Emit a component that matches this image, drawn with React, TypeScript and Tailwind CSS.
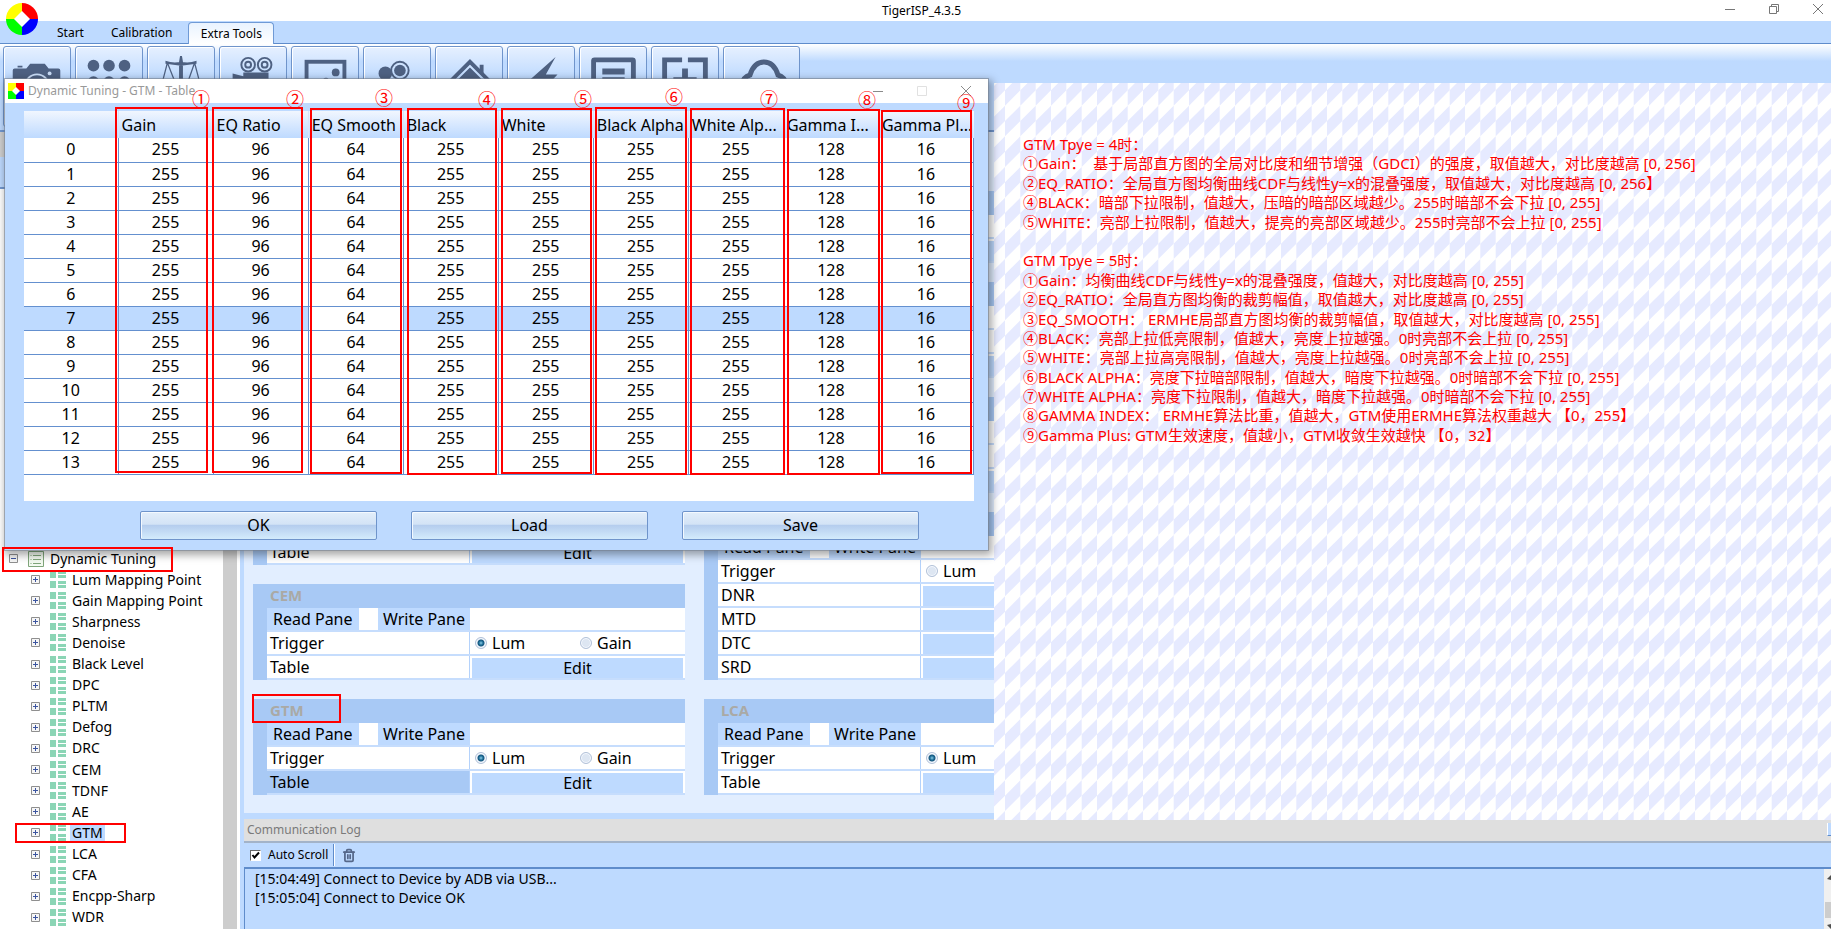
import type { ReactNode } from 'react';
import { Trash2 } from 'lucide-react';

const UI_FONT = "font-['Noto_Sans','Noto_Sans_CJK_SC',sans-serif]";

const columns = [
  { title: 'Gain', value: 255 },
  { title: 'EQ Ratio', value: 96 },
  { title: 'EQ Smooth', value: 64 },
  { title: 'Black', value: 255 },
  { title: 'White', value: 255 },
  { title: 'Black Alpha', value: 255 },
  { title: 'White Alp...', value: 255 },
  { title: 'Gamma I...', value: 128 },
  { title: 'Gamma Pl...', value: 16 },
];

const rowCount = 14;
const selectedRow = 7;
const focusedColumn = 2;

const treeItems = [
  'Lum Mapping Point',
  'Gain Mapping Point',
  'Sharpness',
  'Denoise',
  'Black Level',
  'DPC',
  'PLTM',
  'Defog',
  'DRC',
  'CEM',
  'TDNF',
  'AE',
  'GTM',
  'LCA',
  'CFA',
  'Encpp-Sharp',
  'WDR',
];

const notes = [
  'GTM Tpye = 4时：',
  '①Gain：  基于局部直方图的全局对比度和细节增强（GDCI）的强度，取值越大，对比度越高 [0, 256]',
  '②EQ_RATIO：全局直方图均衡曲线CDF与线性y=x的混叠强度，取值越大，对比度越高 [0, 256】',
  '④BLACK：暗部下拉限制，值越大，压暗的暗部区域越少。255时暗部不会下拉 [0, 255]',
  '⑤WHITE：亮部上拉限制，值越大，提亮的亮部区域越少。255时亮部不会上拉 [0, 255]',
  '',
  'GTM Tpye = 5时：',
  '①Gain：均衡曲线CDF与线性y=x的混叠强度，值越大，对比度越高 [0, 255]',
  '②EQ_RATIO：全局直方图均衡的裁剪幅值，取值越大，对比度越高 [0, 255]',
  '③EQ_SMOOTH： ERMHE局部直方图均衡的裁剪幅值，取值越大，对比度越高 [0, 255]',
  '④BLACK：亮部上拉低亮限制，值越大，亮度上拉越强。0时亮部不会上拉 [0, 255]',
  '⑤WHITE：亮部上拉高亮限制，值越大，亮度上拉越强。0时亮部不会上拉 [0, 255]',
  '⑥BLACK ALPHA：亮度下拉暗部限制，值越大，暗度下拉越强。0时暗部不会下拉 [0, 255]',
  '⑦WHITE ALPHA：亮度下拉限制，值越大，暗度下拉越强。0时暗部不会下拉 [0, 255]',
  '⑧GAMMA INDEX： ERMHE算法比重，值越大，GTM使用ERMHE算法权重越大 【0，255】',
  '⑨Gamma Plus: GTM生效速度，值越小，GTM收敛生效越快 【0，32】',
];

const columnMarks = [
  { mark: '①', box: 'left-[115px] top-[107px] w-[93px] h-[366px]', label: 'left-[192px] top-[86px]' },
  { mark: '②', box: 'left-[212px] top-[107px] w-[91px] h-[366px]', label: 'left-[286px] top-[86px]' },
  { mark: '③', box: 'left-[310px] top-[108px] w-[92px] h-[366px]', label: 'left-[375px] top-[85px]' },
  { mark: '④', box: 'left-[407px] top-[108px] w-[90px] h-[367px]', label: 'left-[478px] top-[87px]' },
  { mark: '⑤', box: 'left-[501px] top-[108px] w-[91px] h-[366px]', label: 'left-[574px] top-[86px]' },
  { mark: '⑥', box: 'left-[595px] top-[107px] w-[92px] h-[368px]', label: 'left-[665px] top-[84px]' },
  { mark: '⑦', box: 'left-[690px] top-[108px] w-[95px] h-[367px]', label: 'left-[760px] top-[86px]' },
  { mark: '⑧', box: 'left-[787px] top-[109px] w-[93px] h-[366px]', label: 'left-[858px] top-[87px]' },
  { mark: '⑨', box: 'left-[881px] top-[110px] w-[91px] h-[364px]', label: 'left-[957px] top-[90px]' },
];

const otherMarks = [
  'left-[2px] top-[547px] w-[171px] h-[25px]',
  'left-[252px] top-[694px] w-[89px] h-[29px]',
  'left-[15px] top-[823px] w-[111px] h-[20px]',
];

const tools: { name: string; art: ReactNode }[] = [
  {
    name: 'Capture',
    art: (
      <>
        <path d="M14 18h5v2h-5zM9 23q0-2 2-2h12l4-5h15l4 5h10q2 0 2 2v30H9z" />
        <circle cx="34" cy="39" r="12" fill="none" stroke="#c9dcf6" strokeWidth="2" />
        <circle cx="47" cy="26" r="2" fill="#c9dcf6" />
      </>
    ),
  },
  {
    name: 'Dots',
    art: (
      <>
        {[18, 35, 52].map((y) => [18, 34, 50].map((x) => <circle key={`${x}-${y}`} cx={x} cy={y} r="6" />))}
      </>
    ),
  },
  {
    name: 'Balance',
    art: (
      <>
        <path d="M33 8h2l1 6v46h-4V14zM18 13q8 3 16 1q8 2 16-1v3q-8 1-16 2q-8-1-16-2z" />
        <path d="M20 15 14 38M20 15 29 38M48 15 40 38M48 15 54 38" fill="none" stroke="#4e6182" strokeWidth="1.3" />
      </>
    ),
  },
  {
    name: 'Video',
    art: (
      <>
        <circle cx="29" cy="17" r="7" fill="none" stroke="#4e6182" strokeWidth="2" />
        <circle cx="46" cy="17" r="7" fill="none" stroke="#4e6182" strokeWidth="2" />
        <circle cx="29" cy="17" r="3" fill="none" stroke="#4e6182" strokeWidth="2" />
        <circle cx="46" cy="17" r="3" fill="none" stroke="#4e6182" strokeWidth="2" />
        <path d="M13 26l11 3v-4h26v25H24v-4l-11 4z" />
      </>
    ),
  },
  {
    name: 'Picture',
    art: (
      <>
        <rect x="15" y="14" width="39" height="36" fill="none" stroke="#4e6182" strokeWidth="4" />
        <circle cx="45" cy="25" r="4" />
        <path d="M20 46l12-14q3-3 6 0l12 14z" />
      </>
    ),
  },
  {
    name: 'Blend',
    art: (
      <>
        <circle cx="22" cy="26" r="7" />
        <circle cx="37" cy="23" r="9" fill="none" stroke="#4e6182" strokeWidth="2" />
        <circle cx="37" cy="23" r="6" />
        <circle cx="30" cy="40" r="8" />
      </>
    ),
  },
  {
    name: 'Home',
    art: (
      <>
        <path d="M12 37 35 14 58 37" fill="none" stroke="#4e6182" strokeWidth="4" />
        <path d="M35 20 51 36v16H19V36zM45 17h4v11l-4-4z" />
      </>
    ),
  },
  { name: 'Flash', art: <path d="M49 9 22 33h12l-9 22 26-28h-12z" /> },
  {
    name: 'List',
    art: (
      <>
        <rect x="14" y="12" width="41" height="42" rx="1" fill="none" stroke="#4e6182" strokeWidth="5" />
        <path d="M23 21h23v6H23zM23 30h23v5H23zM23 40h23v5H23z" />
      </>
    ),
  },
  {
    name: 'Focus',
    art: (
      <>
        <path d="M13 32V12h18M37 12h18v20" fill="none" stroke="#4e6182" strokeWidth="5" />
        <path d="M31 21h6v9h9v6h-9v9h-6v-9h-9v-6h9z" />
      </>
    ),
  },
  {
    name: 'Cloud',
    art: <path d="M14 38q1-8 8-10q4-13 14-13t14 13q7 2 8 10" fill="none" stroke="#4e6182" strokeWidth="5" />,
  },
];

function Logo({ square = false, className }: { square?: boolean; className: string }) {
  return (
    <svg viewBox="0 0 32 32" className={className} aria-hidden="true">
      {square ? (
        <>
          <path d="M0 0h16v16H0z" fill="#ffff00" />
          <path d="M16 0h16v16H16z" fill="#ff0000" />
          <path d="M0 16h16v16H0z" fill="#00ff00" />
          <path d="M16 16h16v16H16z" fill="#0000ff" />
        </>
      ) : (
        <>
          <path d="M16 16H0A16 16 0 0 1 16 0z" fill="#ffff00" />
          <path d="M16 16V0a16 16 0 0 1 16 16z" fill="#ff0000" />
          <path d="M16 16v16A16 16 0 0 1 0 16z" fill="#00ff00" />
          <path d="M16 16h16a16 16 0 0 1-16 16z" fill="#0000ff" />
        </>
      )}
      <path d="M16 8 24 16 16 24 8 16z" fill="#fff" />
    </svg>
  );
}

function WindowButtons({ restore = false, tone }: { restore?: boolean; tone: string }) {
  return (
    <div className={`flex items-center ${tone}`}>
      <button type="button" aria-label="Minimize" className="flex w-11 justify-center">
        <svg viewBox="0 0 10 10" className="h-[10px] w-[10px]" fill="none" stroke="currentColor">
          <path d="M0 5.5h10" />
        </svg>
      </button>
      <button type="button" aria-label="Maximize" className={`flex w-11 justify-center ${restore ? '' : 'opacity-25'}`}>
        <svg viewBox="0 0 10 10" className="h-[10px] w-[10px]" fill="none" stroke="currentColor">
          {restore ? <path d="M.5 2.5h7v7h-7zM2.5 2.5v-2h7v7h-2" /> : <path d="M.5.5h9v9h-9z" />}
        </svg>
      </button>
      <button type="button" aria-label="Close" className="flex w-11 justify-center">
        <svg viewBox="0 0 10 10" className="h-[10px] w-[10px]" fill="none" stroke="currentColor">
          <path d="M0 0 10 10M10 0 0 10" />
        </svg>
      </button>
    </div>
  );
}

function Header() {
  return (
    <header>
      <div className="relative flex h-[21px] items-center justify-center bg-white pl-3">
        <Logo className="absolute top-[3px] left-[6px] z-10 h-8 w-8" />
        <h1 className="text-xs text-black">TigerISP_4.3.5</h1>
        <div className="absolute top-0 right-[-9px] flex h-[17px]">
          <WindowButtons restore tone="text-[#777777]" />
        </div>
      </div>
      <nav className="flex h-[23px] items-end border-b border-[#5f8ccb] bg-[#bedaff] pl-[39px] text-xs text-black">
        <button type="button" className="h-[21px] px-[18px]">Start</button>
        <button type="button" className="h-[21px] px-[9px]">Calibration</button>
        <button
          type="button"
          className="-mb-px ml-[7px] h-[22px] w-[86px] rounded-t border border-b-0 border-[#6f9ad6] bg-gradient-to-b from-[#e9f3ff] to-white"
        >
          Extra Tools
        </button>
      </nav>
      <div className="flex h-[88px] gap-1 border-b-2 border-[#7297cf] bg-gradient-to-b from-white via-[#bedaff] via-20% to-[#bedaff] px-[3px] pt-[2px] pb-[3px]">
        {tools.map((tool, index) => (
          <button
            key={tool.name}
            type="button"
            aria-label={tool.name}
            className={`flex justify-center rounded-[3px] border border-[#6f94cb] bg-gradient-to-b from-[#e6f0ff] via-[#bedaff] via-40% to-[#a9c6f2] shadow-[inset_1px_1px_0_#ffffff] ${
              index === tools.length - 1 ? 'w-[77px]' : 'w-[68px]'
            }`}
          >
            <svg viewBox="0 0 68 80" className="h-20 w-[68px]" fill="#4e6182">
              {tool.art}
            </svg>
          </button>
        ))}
      </div>
    </header>
  );
}

function Expander({ open = false }: { open?: boolean }) {
  return (
    <svg viewBox="0 0 9 9" className="h-[9px] w-[9px] shrink-0" fill="#f6f6f6" stroke="#8f8f8f">
      <path d="M.5.5h8v8h-8z" />
      <path d={open ? 'M2 4.5h5' : 'M2 4.5h5M4.5 2v5'} stroke="#3c55a0" />
    </svg>
  );
}

function TreePanel() {
  return (
    <aside className="flex w-[240px] shrink-0 flex-col bg-white">
      <div className="h-[25px] bg-[#cfcfcf]" />
      <div className="h-8 border-b-2 border-[#7297cf] bg-[#bedaff]" />
      <div className="flex min-h-0 flex-1">
        <ul className="mt-auto mb-px flex h-[380px] flex-1 flex-col justify-between text-sm text-black">
          <li className="flex h-[21px] items-center pl-[9px]">
            <Expander open />
            <svg viewBox="0 0 16 16" className="mr-[6px] ml-[10px] h-4 w-4" fill="#f3faf0" stroke="#7fa57a">
              <path d="M.5.5h15v15H.5z" />
              <path d="M5 4.5h8M5 8.5h8M5 12.5h8M2.5 4.5h1M2.5 8.5h1M2.5 12.5h1" />
            </svg>
            <span>Dynamic Tuning</span>
          </li>
          {treeItems.map((item) => (
            <li key={item} className="flex h-[21px] items-center pl-[31px]">
              <Expander />
              <svg viewBox="0 0 16 17" className="mr-1 ml-[10px] h-[17px] w-4" fill="#8bd5b5">
                <path d="M0 0h6v7H0zM8 0h8v3H8zM8 4h8v3H8zM0 10h6v7H0zM8 10h8v3H8zM8 14h8v3H8z" />
              </svg>
              <span className={`px-[2px] ${item === 'GTM' ? 'bg-[#bedaff]' : ''}`}>{item}</span>
            </li>
          ))}
        </ul>
        <div className="mr-[3px] w-[14px] bg-[#cdcdcd]" />
      </div>
    </aside>
  );
}

type Row = { kind: 'pane' | 'trigger' | 'edit'; label?: string; checked?: string; selected?: boolean };

function SettingRow({ row, group }: { row: Row; group: string }) {
  if (row.kind === 'pane') {
    return (
      <div className="flex h-6 border-b-2 border-[#c6ddfd] bg-white">
        <span className="w-[92px] bg-[#bedaff] pl-[6px] leading-[23px]">{row.label === undefined ? 'Read Pane' : row.label}</span>
        <span className="ml-[19px] w-[92px] bg-[#bedaff] pl-[5px] leading-[23px]">
          {row.label === undefined ? 'Write Pane' : row.label}
        </span>
      </div>
    );
  }
  return (
    <div className="flex h-6 border-b-2 border-[#c6ddfd] bg-white">
      <span className={`w-[203px] border-r border-[#b4d2fb] pl-[3px] leading-[23px] ${row.selected ? 'bg-[#a8c9f5]' : ''}`}>
        {row.label}
      </span>
      {row.kind === 'edit' ? (
        <button type="button" className="mx-[2px] mt-[2px] flex-1 bg-[#bedaff] leading-5">
          {row.label ? 'Edit' : ''}
        </button>
      ) : (
        <div className="flex flex-1 items-center pl-[5px]">
          {['Lum', 'Gain'].map((option) => (
            <label key={option} className="flex w-[105px] items-center gap-[5px]">
              <input
                type="radio"
                name={group}
                defaultChecked={row.checked === option}
                className="h-3 w-3 appearance-none rounded-full border border-[#b3c2d8] bg-[#dde6f2] shadow-[inset_0_0_0_1px_#f7faff] checked:bg-[radial-gradient(circle,#8fd0e8_0,#1f6f99_2px,#17587e_3px,#e4ecf6_4px)]"
              />
              {option}
            </label>
          ))}
        </div>
      )}
    </div>
  );
}

function SettingGroup({ id, title, rows }: { id: string; title?: string; rows: Row[] }) {
  return (
    <section className="w-[432px] bg-[#a8c9f5] pl-[14px]">
      <h2 className="h-6 pl-[3px] text-[15px] leading-[22px] font-bold text-[#aaa9a5]">{title}</h2>
      {rows.map((row, index) => (
        <SettingRow key={index} row={row} group={id} />
      ))}
    </section>
  );
}

function SettingsPanel() {
  return (
    <div className="flex min-h-0 flex-1 items-end gap-[19px] overflow-hidden border-b-[6px] border-[#bedaff] bg-[#e2eeff] pb-[18px] pl-[9px] text-base text-black">
      <div className="flex shrink-0 flex-col gap-[19px]">
        <SettingGroup id="drc" rows={[{ kind: 'pane', label: '' }, { kind: 'edit' }, { kind: 'edit', label: 'Table' }]} />
        <SettingGroup
          id="cem"
          title="CEM"
          rows={[{ kind: 'pane' }, { kind: 'trigger', label: 'Trigger', checked: 'Lum' }, { kind: 'edit', label: 'Table' }]}
        />
        <SettingGroup
          id="gtm"
          title="GTM"
          rows={[
            { kind: 'pane' },
            { kind: 'trigger', label: 'Trigger', checked: 'Lum' },
            { kind: 'edit', label: 'Table', selected: true },
          ]}
        />
      </div>
      <div className="flex shrink-0 flex-col gap-[19px]">
        <SettingGroup id="gain-point" rows={[{ kind: 'pane', label: '' }, { kind: 'edit' }]} />
        <SettingGroup id="denoise" rows={[{ kind: 'pane', label: '' }, { kind: 'pane', label: '' }, { kind: 'edit' }]} />
        <SettingGroup id="dpc" rows={[{ kind: 'pane', label: '' }, { kind: 'pane', label: '' }, { kind: 'edit' }]} />
        <SettingGroup
          id="tdnf"
          rows={[
            { kind: 'pane' },
            { kind: 'trigger', label: 'Trigger', checked: 'Gain' },
            { kind: 'edit', label: 'DNR' },
            { kind: 'edit', label: 'MTD' },
            { kind: 'edit', label: 'DTC' },
            { kind: 'edit', label: 'SRD' },
          ]}
        />
        <SettingGroup
          id="lca"
          title="LCA"
          rows={[{ kind: 'pane' }, { kind: 'trigger', label: 'Trigger', checked: 'Lum' }, { kind: 'edit', label: 'Table' }]}
        />
      </div>
    </div>
  );
}

function LogPanel() {
  return (
    <section className="shrink-0">
      <div className="flex h-[22px] items-center justify-between bg-[#dfdfdf] pb-px pl-[3px] text-xs text-[#7a7a7a]">
        <h2>Communication Log</h2>
        <button type="button" aria-label="Pin" className="h-[13px] w-1 border-b border-l border-b-[#5f8ccb] border-l-white bg-[#bedaff]" />
      </div>
      <div className="flex h-7 items-center border-t-2 border-b-2 border-t-[#a3b3c8] border-b-[#5f8ccb] bg-[#bedaff] pl-[6px] text-xs text-black">
        <label className="flex items-center gap-[7px]">
          <span className="relative flex">
            <input
              type="checkbox"
              defaultChecked
              className="h-[11px] w-[11px] appearance-none border border-t-[#666666] border-r-white border-b-white border-l-[#666666] bg-white"
            />
            <svg viewBox="0 0 11 11" className="pointer-events-none absolute inset-0 h-[11px] w-[11px]" fill="none" stroke="#000" strokeWidth="2">
              <path d="M2.5 5 4.5 7.5 9 2.5" />
            </svg>
          </span>
          Auto Scroll
        </label>
        <div className="ml-[5px] h-[22px] border-r border-l border-r-white border-l-[#5f8ccb]" />
        <button type="button" aria-label="Clear log" className="ml-[7px]">
          <Trash2 className="h-[15px] w-[14px] text-[#56688a]" strokeWidth={3} />
        </button>
      </div>
      <div className="flex h-[60px] border-l border-[#5f8ccb] bg-[#bedaff]">
        <div className="flex-1 pl-[10px] text-sm leading-[19px] text-black">
          <p>[15:04:49] Connect to Device by ADB via USB...</p>
          <p>[15:05:04] Connect to Device OK</p>
        </div>
        <div className="flex w-[7px] flex-col items-end bg-[#f0f0f0] pt-[6px] text-[#505050]">
          <svg viewBox="0 0 4 5" className="h-[5px] w-1" fill="currentColor">
            <path d="M0 4 4 0v5z" />
          </svg>
          <div className="mt-[22px] h-4 w-[6px] bg-[#cdcdcd]" />
          <svg viewBox="0 0 4 5" className="mt-[6px] h-[5px] w-1" fill="currentColor">
            <path d="M0 1 4 5V0z" />
          </svg>
        </div>
      </div>
    </section>
  );
}

function TuningDialog() {
  return (
    <div
      role="dialog"
      aria-label="Dynamic Tuning - GTM - Table"
      className="absolute top-[79px] left-[5px] w-[983px] bg-[#bedaff] pb-[10px] shadow-[0_0_0_1px_rgba(120,130,145,0.6),2px_3px_8px_2px_rgba(0,0,0,0.35)]"
    >
      <div className="flex h-6 items-center bg-white pl-[3px]">
        <Logo square className="h-4 w-4" />
        <span className="ml-1 flex-1 pb-px text-xs text-[#999999]">Dynamic Tuning - GTM - Table</span>
        <WindowButtons tone="text-[#8a8a8a]" />
      </div>
      <div className="mt-2 mr-[14px] ml-[19px] bg-white pb-[26px]">
        <table className="w-[950px] table-fixed border-collapse text-base text-black">
          <thead>
            <tr className="h-[27px] bg-gradient-to-b from-[#f1f6fe] to-[#bedaff]">
              <td className="w-[94px]" />
              {columns.map((column) => (
                <th key={column.title} className="w-[95px] overflow-hidden border-l border-[#d5e5fb] p-0 pl-[3px] text-left leading-6 font-normal whitespace-nowrap">
                  {column.title}
                </th>
              ))}
            </tr>
          </thead>
          <tbody>
            {Array.from({ length: rowCount }, (_, row) => (
              <tr key={row} className={`h-6 border-b border-[#6490cf] ${row === selectedRow ? 'bg-[#bedaff]' : ''}`}>
                <td className="p-0 text-center leading-[23px]">{row}</td>
                {columns.map((column, index) => (
                  <td
                    key={column.title}
                    className={`border-x border-[#6490cf] p-0 text-center leading-[23px] ${
                      row === selectedRow && index === focusedColumn ? 'bg-white' : ''
                    }`}
                  >
                    {column.value}
                  </td>
                ))}
              </tr>
            ))}
          </tbody>
        </table>
      </div>
      <div className="mt-[10px] flex gap-[34px] pl-[135px]">
        {['OK', 'Load', 'Save'].map((label) => (
          <button
            key={label}
            type="button"
            className="h-[29px] w-[237px] rounded-[2px] border border-[#6f94cb] bg-[linear-gradient(to_bottom,#e3eefa_0%,#d3e3f6_45%,#b5cdee_50%,#d3ebfc_100%)] text-base leading-6 text-black shadow-[inset_1px_1px_0_#f4f9ff]"
          >
            {label}
          </button>
        ))}
      </div>
    </div>
  );
}

function NotesOverlay() {
  return (
    <div className="absolute top-[83px] right-0 bottom-[109px] left-[994px] overflow-hidden bg-white">
      <svg className="absolute inset-0 h-full w-full" aria-hidden="true">
        <defs>
          <pattern id="slant" x="11" y="-8" width="46" height="92" viewBox="0 0 3 6" patternUnits="userSpaceOnUse">
            {[0, 1, 2].map((col) =>
              [-2, 0, 2, 4].map((top) => (
                <path key={`${col}-${top}`} d={`M${col} ${top + 1}l1-1v1l-1 1z`} fill="#e6eaff" />
              )),
            )}
          </pattern>
        </defs>
        <rect width="100%" height="100%" fill="url(#slant)" />
      </svg>
      <div className="relative mt-[52px] ml-[29px] flex h-[310px] flex-col justify-between text-[15px] whitespace-pre text-[#ff0000]">
        {notes.map((line, index) => (
          <p key={index} className="h-[19px] shrink-0 leading-[19px]">
            {line}
          </p>
        ))}
      </div>
    </div>
  );
}

function Marks() {
  return (
    <div className="pointer-events-none absolute inset-0">
      {columnMarks.map((item) => (
        <div key={item.mark}>
          <div className={`absolute border-2 border-[#ff0000] ${item.box}`} />
          <span className={`absolute font-['Noto_Sans_CJK_SC',sans-serif] text-lg leading-6 text-[#ff0000] ${item.label}`}>
            {item.mark}
          </span>
        </div>
      ))}
      {otherMarks.map((box) => (
        <div key={box} className={`absolute border-2 border-[#ff0000] ${box}`} />
      ))}
    </div>
  );
}

export default function App() {
  return (
    <div className={`relative flex h-screen flex-col overflow-hidden bg-[#bedaff] ${UI_FONT}`}>
      <Header />
      <div className="flex min-h-0 flex-1">
        <TreePanel />
        <main className="flex min-w-0 flex-1 flex-col pl-1">
          <SettingsPanel />
          <LogPanel />
        </main>
      </div>
      <NotesOverlay />
      <TuningDialog />
      <Marks />
    </div>
  );
}
